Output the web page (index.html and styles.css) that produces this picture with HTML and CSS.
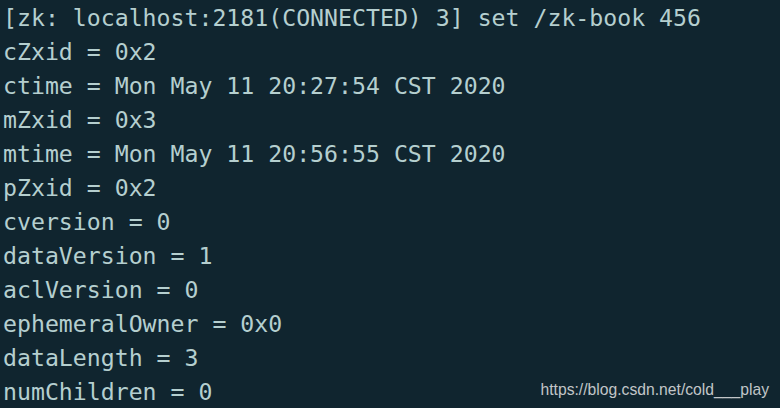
FILE: index.html
```html
<!DOCTYPE html>
<html>
<head>
<meta charset="utf-8">
<link rel="stylesheet" href="styles.css">
</head>
<body>
<div class="term">
<div class="line">[zk: localhost:2181(CONNECTED) 3] set /zk-book 456</div>
<div class="line">cZxid = 0x2</div>
<div class="line">ctime = Mon May 11 20:27:54 CST 2020</div>
<div class="line">mZxid = 0x3</div>
<div class="line">mtime = Mon May 11 20:56:55 CST 2020</div>
<div class="line">pZxid = 0x2</div>
<div class="line">cversion = 0</div>
<div class="line">dataVersion = 1</div>
<div class="line">aclVersion = 0</div>
<div class="line">ephemeralOwner = 0x0</div>
<div class="line">dataLength = 3</div>
<div class="line last"><span>numChildren = 0</span><span class="mark">https://blog.csdn.net/cold___play</span></div>
</div>
</body>
</html>
```
FILE: styles.css
```css
html, body {
  margin: 0;
  padding: 0;
  background: #10252f;
  width: 780px;
  height: 408px;
  overflow: hidden;
}
.term {
  padding: 1px 0 0 3px;
  font-family: "DejaVu Sans Mono", monospace;
  font-size: 23.2px;
  line-height: 34px;
  color: #b5cfcf;
}
.line {
  white-space: pre;
}
.last {
  display: flex;
  justify-content: space-between;
  align-items: center;
  padding-right: 11px;
}
.mark {
  font-family: "Liberation Sans", Arial, sans-serif;
  font-size: 15.7px;
  line-height: 20px;
  margin-top: -4px;
  color: #c2c6c8;
}
```
